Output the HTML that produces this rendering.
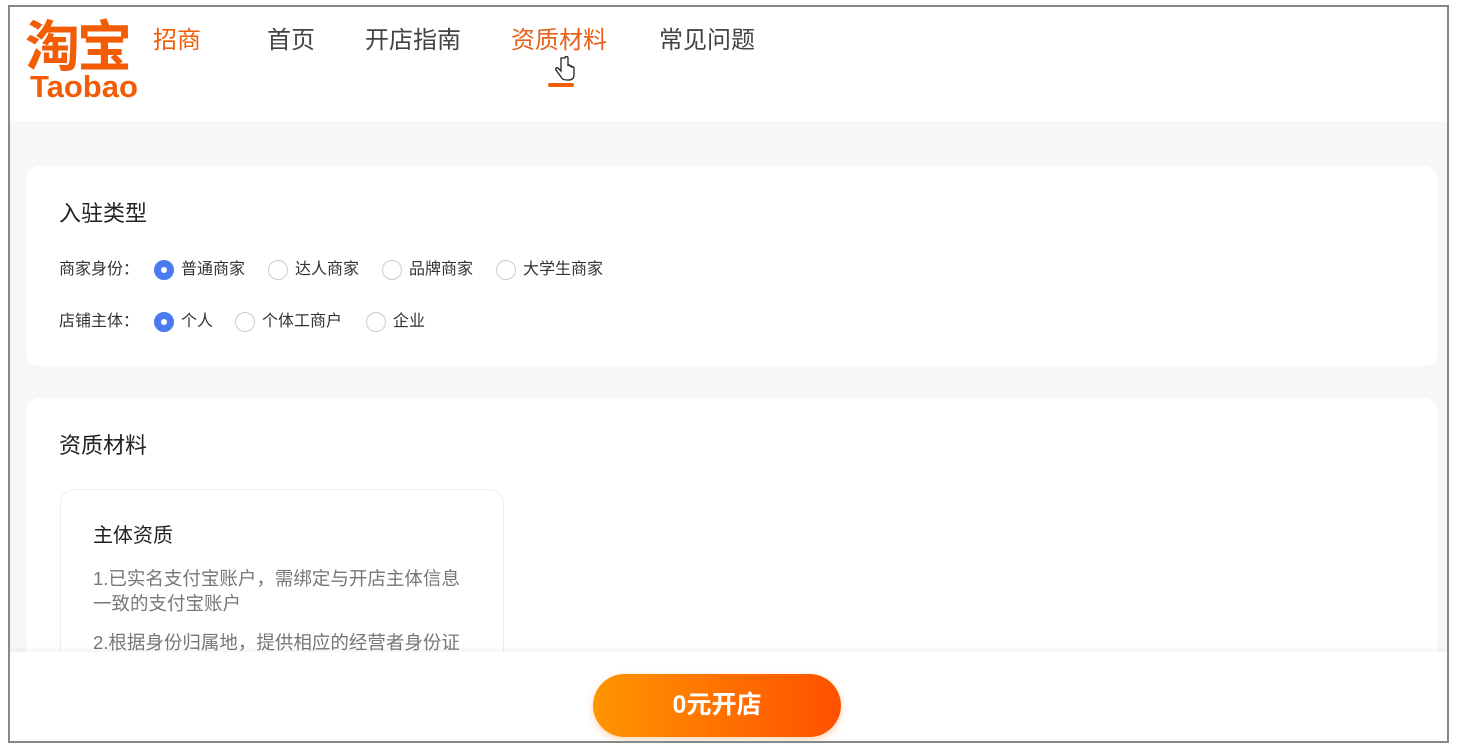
<!DOCTYPE html>
<html><head><meta charset="utf-8"><style>
*{margin:0;padding:0;box-sizing:border-box}
html,body{width:1462px;height:749px;overflow:hidden}
body{background:#fff;position:relative;font-family:"Liberation Sans","Noto Sans CJK SC",sans-serif}
.frame{position:absolute;left:8px;top:5px;width:1441px;height:738px;border:2px solid #888;background:#f6f7f9;overflow:hidden}
.hdr{position:absolute;left:0;top:0;width:100%;height:114px;background:#fff}
.a{position:absolute;white-space:nowrap}
.card{position:absolute;background:#fff;border-radius:14px;overflow:hidden}
.r{position:absolute;width:20px;height:20px;border-radius:50%;border:1px solid #ccc;background:#fff}
.r.on{background:#4a7cf0;border-color:#4a7cf0}
.r.on::after{content:"";position:absolute;left:6px;top:6px;width:6px;height:6px;border-radius:50%;background:#fff}
.t{font-size:16px;color:#333;line-height:20px}
.nav{font-size:24px;line-height:30px;top:19px}
</style></head><body>
<div class="frame">
<div class="hdr">
 <div class="a" style="left:15px;top:12px;font-size:55px;font-weight:bold;color:#f25c05;line-height:56px;letter-spacing:-3px">淘宝</div>
 <div class="a" style="left:20px;top:64px;font-size:31px;font-weight:bold;color:#f25c05;line-height:32px">Taobao</div>
 <div class="a nav" style="left:143px;color:#f25c05">招商</div>
 <div class="a nav" style="left:257px;color:#444">首页</div>
 <div class="a nav" style="left:355px;color:#444">开店指南</div>
 <div class="a nav" style="left:501px;color:#e8601a">资质材料</div>
 <div class="a nav" style="left:649px;color:#444">常见问题</div>
 <div class="a" style="left:538px;top:76px;width:26px;height:4px;background:#f25c05;border-radius:2px"></div>
 <svg class="a" style="left:544px;top:48px" width="24" height="30" viewBox="0 0 24 30"><path d="M7 3v13l-3-3c-1.5-1-3 .5-2 2l5 7c1 2 3 3 6 3h2c3 0 5-2 5-5v-7c0-1.5-2-1.5-2 0v-1c0-1.5-2-1.5-2 0v-1c0-1.5-2-1.5-2 0V3c0-2-3-2-3 0z" fill="#fff" stroke="#222" stroke-width="1.3"/></svg>
</div>
<div class="card" style="left:16px;top:159px;width:1412px;height:200px">
 <div class="a" style="left:33px;top:34px;font-size:22px;line-height:28px;color:#222">入驻类型</div>
 <div class="a t" style="left:33px;top:94px">商家身份：</div>
 <div class="r on" style="left:128px;top:94px"></div><div class="a t" style="left:155px;top:94px">普通商家</div>
 <div class="r" style="left:242px;top:94px"></div><div class="a t" style="left:269px;top:94px">达人商家</div>
 <div class="r" style="left:356px;top:94px"></div><div class="a t" style="left:383px;top:94px">品牌商家</div>
 <div class="r" style="left:470px;top:94px"></div><div class="a t" style="left:497px;top:94px">大学生商家</div>
 <div class="a t" style="left:33px;top:146px">店铺主体：</div>
 <div class="r on" style="left:128px;top:146px"></div><div class="a t" style="left:155px;top:146px">个人</div>
 <div class="r" style="left:209px;top:146px"></div><div class="a t" style="left:236px;top:146px">个体工商户</div>
 <div class="r" style="left:340px;top:146px"></div><div class="a t" style="left:367px;top:146px">企业</div>
</div>
<div class="card" style="left:16px;top:391px;width:1412px;height:300px">
 <div class="a" style="left:33px;top:34px;font-size:22px;line-height:28px;color:#222">资质材料</div>
 <div class="a" style="left:34px;top:91px;width:444px;height:260px;border:1px solid #eee;border-radius:14px">
  <div class="a" style="left:32px;top:33px;font-size:20px;line-height:26px;color:#222">主体资质</div>
  <div class="a" style="left:32px;top:76px;font-size:18.5px;color:#777;line-height:25px;white-space:normal;width:380px">1.已实名支付宝账户，需绑定与开店主体信息一致的支付宝账户</div>
  <div class="a" style="left:32px;top:140px;font-size:18.5px;color:#777;line-height:25px">2.根据身份归属地，提供相应的经营者身份证</div>
 </div>
</div>
<div class="a" style="left:0;top:645px;width:100%;height:91px;background:#fff;box-shadow:0 -2px 6px rgba(0,0,0,.06)">
 <div class="a" style="left:583px;top:22px;width:248px;height:63px;border-radius:32px;background:linear-gradient(90deg,#ff9500,#ff5000);box-shadow:0 3px 8px rgba(255,120,0,.3);color:#fff;font-size:25px;font-weight:bold;text-align:center;line-height:63px">0元开店</div>
</div>
</div>
</body></html>
